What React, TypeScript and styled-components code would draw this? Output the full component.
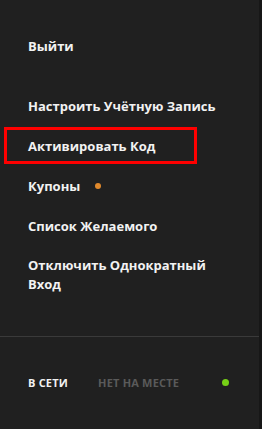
import styled, { createGlobalStyle } from "styled-components";

const GlobalStyle = createGlobalStyle`
    html, body {
        margin: 0;
        padding: 0;
        background: #202020;
    }
`;

const Shell = styled.div`
    display: flex;
    width: 262px;
    height: 429px;
    background: #202020;
    font-family: "Open Sans", "Noto Sans", sans-serif;
`;

const Panel = styled.aside`
    display: flex;
    flex-direction: column;
    width: 259px;
    padding-top: 26px;
`;

const Edge = styled.div`
    width: 3px;
    background: #171717;
`;

const Menu = styled.ul`
    list-style: none;
    margin: 0;
    padding: 0;
    display: flex;
    flex-direction: column;
`;

const Group = styled(Menu)`
    margin-top: 20px;
`;

const Item = styled.li<{ $boxed?: boolean; $tall?: boolean }>`
    position: relative;
    display: flex;
    align-items: center;
    gap: 15px;
    min-height: ${p => (p.$tall ? "58px" : "40px")};
    padding: ${p => (p.$tall ? "10px 50px 10px 28px" : "0 0 0 28px")};
    box-sizing: border-box;
    font-size: 13px;
    font-weight: 700;
    line-height: 19px;
    color: #f2f2f2;

    ${p =>
        p.$boxed &&
        `
        &::after {
            content: "";
            position: absolute;
            left: 4px;
            top: 1px;
            width: 193px;
            height: 37px;
            box-sizing: border-box;
            border: 3px solid #ff0000;
        }
    `}
`;

const Dot = styled.span<{ $color: string; $size: number }>`
    display: inline-block;
    width: ${p => p.$size}px;
    height: ${p => p.$size}px;
    border-radius: 50%;
    background: ${p => p.$color};
`;

const Divider = styled.hr`
    margin: 32px 0 0;
    border: none;
    height: 1px;
    background: #3a3a3a;
`;

const StatusRow = styled.div`
    display: flex;
    align-items: center;
    height: 94px;
    padding: 0 30px 0 28px;
`;

const Status = styled.span<{ $active?: boolean }>`
    font-size: 11px;
    font-weight: 700;
    letter-spacing: 0.2px;
    color: ${p => (p.$active ? "#f2f2f2" : "#5a5a5a")};
    margin-right: 30px;
`;

const Spacer = styled.div`
    flex: 1;
`;

function App() {
    return (
        <>
            <GlobalStyle />
            <Shell>
                <Panel>
                    <Menu>
                        <Item>Выйти</Item>
                    </Menu>
                    <Group>
                        <Item>Настроить Учётную Запись</Item>
                        <Item $boxed>Активировать Код</Item>
                        <Item>
                            Купоны
                            <Dot $color="#e0892c" $size={6} />
                        </Item>
                        <Item>Список Желаемого</Item>
                        <Item $tall>Отключить Однократный Вход</Item>
                    </Group>
                    <Divider />
                    <StatusRow>
                        <Status $active>В СЕТИ</Status>
                        <Status>НЕТ НА МЕСТЕ</Status>
                        <Spacer />
                        <Dot $color="#76d016" $size={7} />
                    </StatusRow>
                </Panel>
                <Edge />
            </Shell>
        </>
    );
}

export default App;
